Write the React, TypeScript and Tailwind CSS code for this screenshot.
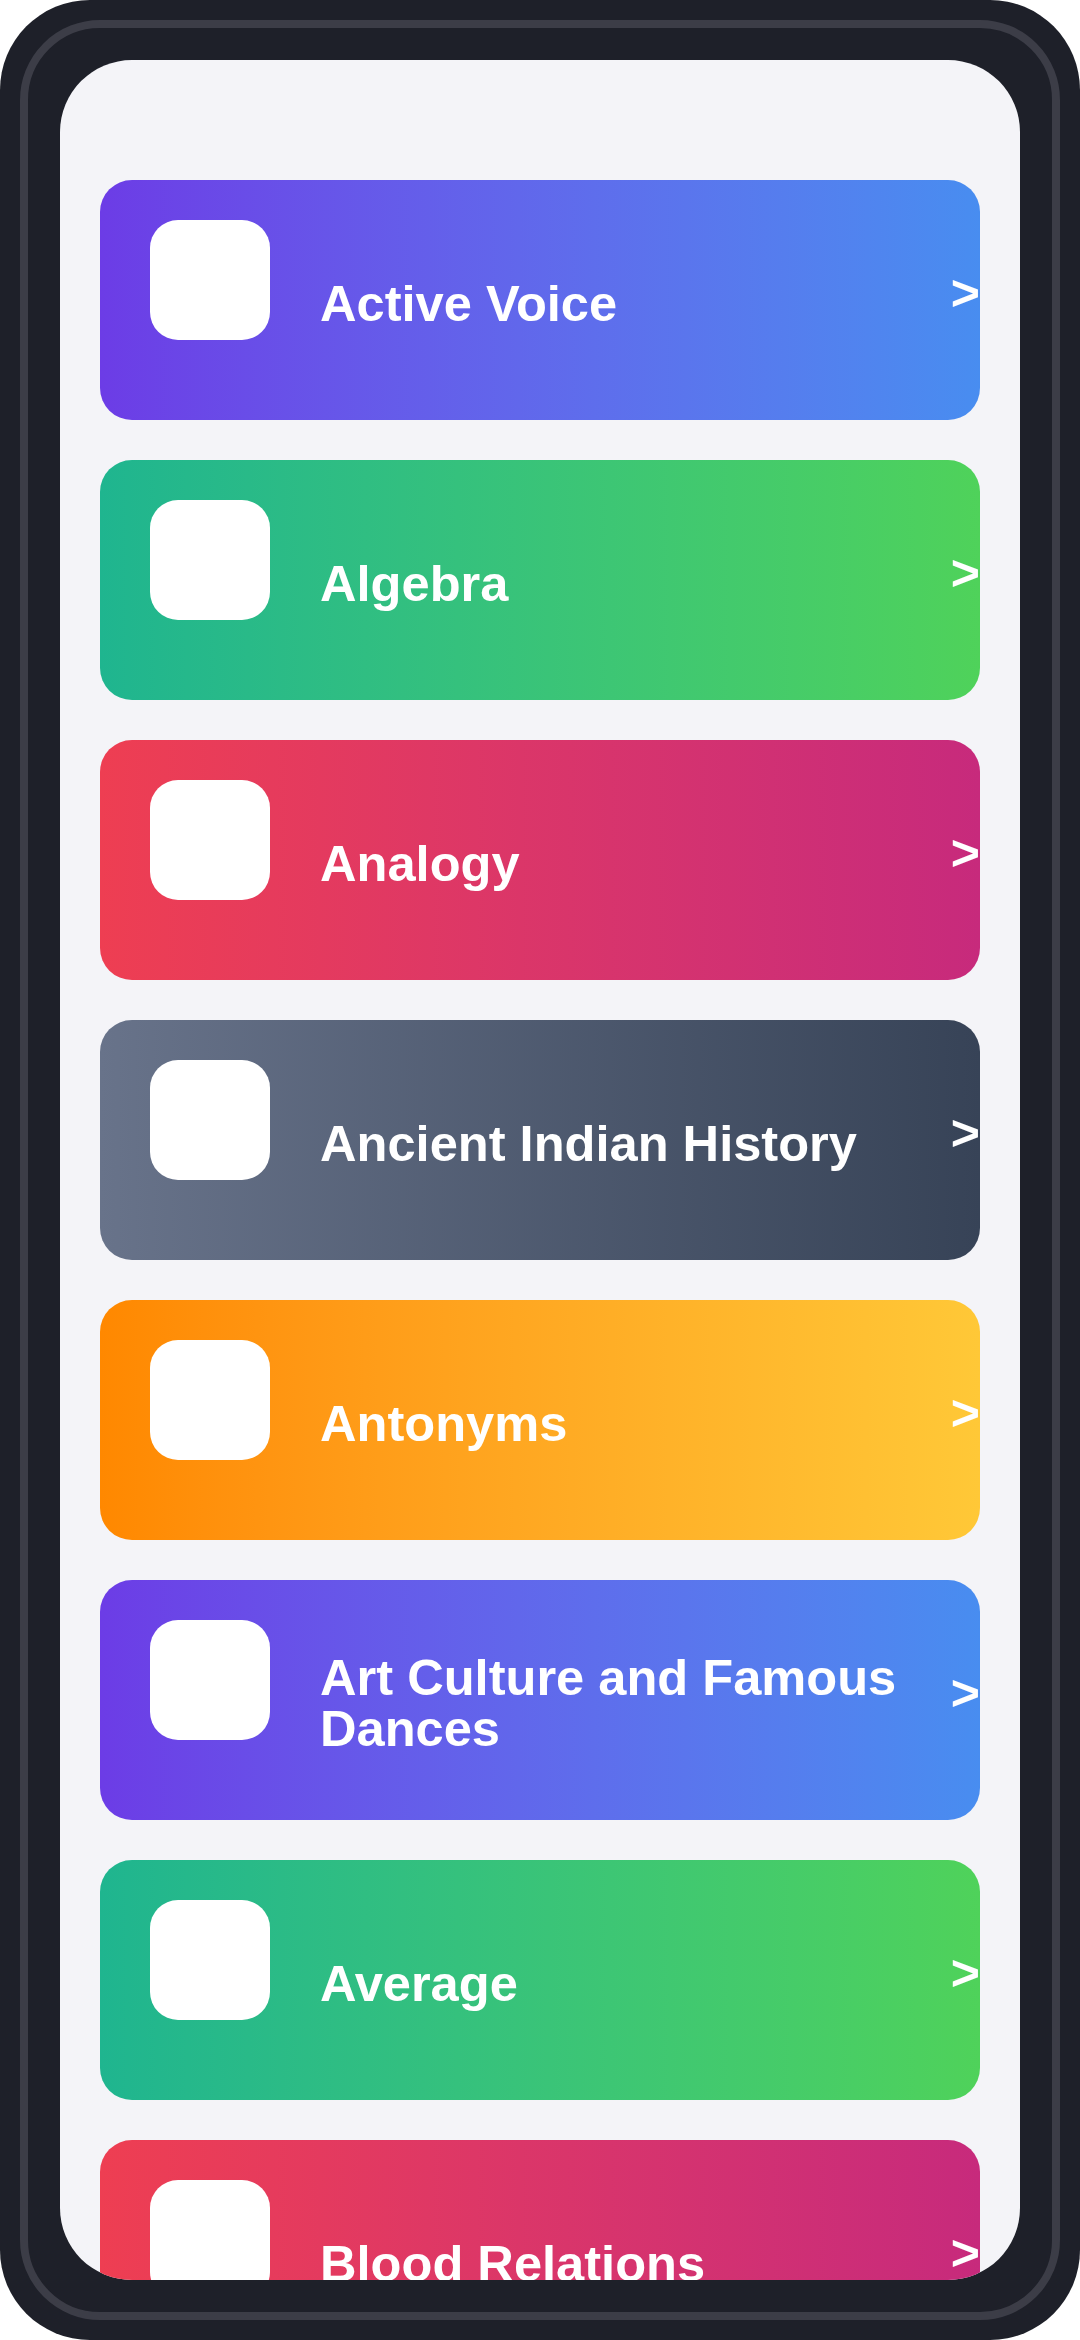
import React from 'react';

const gradients = [
  'from-[#6c3ce6] to-[#488df0]',
  'from-[#1fb58f] to-[#4fd25a]',
  'from-[#ee3e52] to-[#c72a7c]',
  'from-[#68738a] to-[#374357]',
  'from-[#ff8800] to-[#ffc837]',
];

const topics = [
  'Active Voice',
  'Algebra',
  'Analogy',
  'Ancient Indian History',
  'Antonyms',
  'Art Culture and Famous Dances',
  'Average',
  'Blood Relations',
];

const TopicCard: React.FC<{ title: string; gradient: string }> = ({ title, gradient }) => (
  <div
    className={`flex shrink-0 h-[240px] rounded-[32px] bg-linear-to-r ${gradient} pl-[50px] text-white`}
  >
    <div className="self-start mt-[40px] w-[120px] h-[120px] rounded-[28px] bg-white shrink-0" />
    <div className="flex-1 self-center ml-[50px] pt-[6px] text-[50.6px] font-bold leading-[51px]">
      {title}
    </div>
    <div className="self-center -mt-[14px] text-[50px] font-bold leading-none">&gt;</div>
  </div>
);

export default function App() {
  return (
    <div className="w-[1080px] h-[2340px] bg-white font-['Liberation_Sans',Arial,sans-serif]">
      <div className="h-full rounded-[90px] bg-[#1e2029] p-5">
        <div className="h-full rounded-[80px] border-8 border-[#3c3d47] p-[32px]">
          <div className="h-full rounded-[72px] bg-[#f4f4f8] overflow-hidden px-10 pt-[120px] flex flex-col gap-10">
            {topics.map((t, i) => (
              <TopicCard key={t} title={t} gradient={gradients[i % gradients.length]} />
            ))}
          </div>
        </div>
      </div>
    </div>
  );
}
